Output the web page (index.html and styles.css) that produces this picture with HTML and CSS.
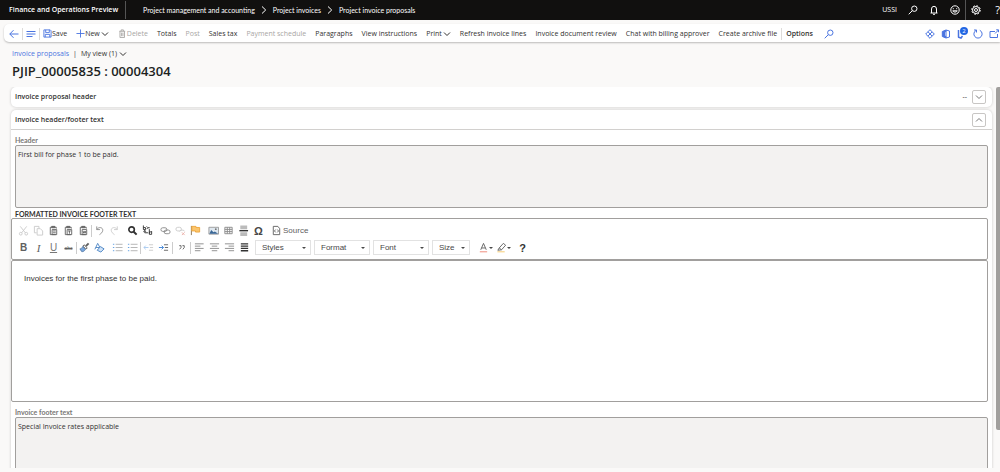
FILE: index.html
```html
<!DOCTYPE html>
<html lang="en">
<head>
  <meta charset="UTF-8">
  <title>Project invoice proposals</title>
  <link rel="stylesheet" href="styles.css">
</head>
<body>

<!-- shared icons -->
<svg class="sprite" aria-hidden="true">
  <symbol id="down" viewBox="0 0 8 8"><path d="M1 2.500 4 5.500 7 2.500"/></symbol>
  <symbol id="up" viewBox="0 0 8 8"><path d="M1 5.500 4 2.500 7 5.500"/></symbol>
  <symbol id="right" viewBox="0 0 8 8"><path d="M2 0.500 5.700 4 2 7.500"/></symbol>
  <symbol id="search" viewBox="0 0 10 10"><circle cx="6.300" cy="3.700" r="2.700"/><path d="M4.300 5.700.7 9.300"/></symbol>
  <symbol id="clip" viewBox="0 0 12 12"><path d="M8.500 10.500h-6v-8H4M7.500 2.500H9V4"/><path d="M4 1.500h3.500v1.500H4z" fill="currentColor"/><path d="M4.500 5h5v5.500h-5z"/></symbol>
</svg>

<header class="topbar">
  <span class="brand">Finance and Operations Preview</span>
  <nav class="crumbs">
    <a href="#">Project management and accounting</a>
    <svg class="i8"><use href="#right"/></svg>
    <a href="#">Project invoices</a>
    <svg class="i8"><use href="#right"/></svg>
    <a href="#">Project invoice proposals</a>
  </nav>
  <div class="top-right">
    <span class="company">USSI</span>
    <button aria-label="Search"><svg class="i10"><use href="#search"/></svg></button>
    <button aria-label="Notifications"><svg class="i10" viewBox="0 0 10 10"><path d="M1.500 8h7M2.500 8V4a2.500 2.700 0 0 1 5 0v4M4 9.300h2"/></svg></button>
    <button aria-label="Feedback"><svg class="i10" viewBox="0 0 10 10"><circle cx="5" cy="5" r="4.200"/><path d="M2.700 5.800a2.500 2.200 0 0 0 4.600 0zM3.300 3.200v1M6.700 3.200v1"/></svg></button>
    <button class="gear" aria-label="Settings"><svg class="i10" viewBox="0 0 10 10"><circle cx="5" cy="5" r="3.500"/><circle cx="5" cy="5" r="1.500"/><circle cx="5" cy="5" r="4.300" stroke-dasharray="1.700 1.670"/></svg></button>
    <button class="help" aria-label="Help">?</button>
  </div>
</header>

<div class="actionbar">
  <button class="blue" aria-label="Back"><svg class="i10" viewBox="0 0 10 10"><path d="M9.500 5H.8M4.500 1.200.8 5l3.700 3.800"/></svg></button>
  <i class="line"></i>
  <button class="blue" aria-label="Show list"><svg class="i10" viewBox="0 0 10 10"><path d="M.5 2.500h9M.5 5h9M.5 7.500h6"/></svg></button>
  <i class="line"></i>
  <button class="action"><svg class="i9 blue" viewBox="0 0 10 10"><path d="M1 1h7l1 1v7H1zM3 1v3h4V1M2.500 9V6h5v3"/></svg>Save</button>
  <button class="action"><svg class="i9 blue" viewBox="0 0 10 10"><path d="M5 .5v9M.5 5h9"/></svg>New<svg class="i8"><use href="#down"/></svg></button>
  <button class="action" disabled><svg class="i9" viewBox="0 0 10 10"><path d="M1.500 2.500h6.500M3.500 2.500V1h2.500v1.500M2.200 2.500v7h5v-7M4 4v4M5.500 4v4"/></svg>Delete</button>
  <button class="action">Totals</button>
  <button class="action" disabled>Post</button>
  <button class="action">Sales tax</button>
  <button class="action" disabled>Payment schedule</button>
  <button class="action">Paragraphs</button>
  <button class="action">View instructions</button>
  <button class="action">Print<svg class="i8"><use href="#down"/></svg></button>
  <button class="action">Refresh invoice lines</button>
  <button class="action">Invoice document review</button>
  <button class="action">Chat with billing approver</button>
  <button class="action">Create archive file</button>
  <i class="line"></i>
  <button class="action strong">Options</button>
  <button class="blue find" aria-label="Search actions"><svg class="i10"><use href="#search"/></svg></button>
  <div class="tools blue">
    <button aria-label="Power Apps"><svg class="i10" viewBox="0 0 10 10"><path d="M5 .7 9.300 5 5 9.300.7 5zM3 2.800 7 7M7 3 5 5M3 7l2-2"/></svg></button>
    <button aria-label="Open in Office"><svg class="i10" viewBox="0 0 10 10"><path d="M5 1 1.300 2.500v5L5 9v-1.500L3.500 7V3L5 2.500z" fill="currentColor"/><path d="M5 1l3.500 1v6L5 9z"/></svg></button>
    <button class="attach" aria-label="Attachments"><svg class="i10" viewBox="0 0 10 10"><path d="M1.500 1v7M1 8l3 1 1.500-2" stroke-width="1.500"/></svg><span class="badge">2</span></button>
    <button aria-label="Refresh"><svg class="i10" viewBox="0 0 10 10"><path d="M3.200 1.300a4.100 4.100 0 1 0 3.600 0M1 1h2.500v2.500"/></svg></button>
    <button aria-label="Open in new window"><svg class="i10" viewBox="0 0 10 10"><path d="M6 2.500H1v6h7.500V5M6 4.500 9.500 1M7.200.8h2.300v2.400"/></svg></button>
  </div>
</div>

<div class="titles">
  <a href="#" class="link">Invoice proposals</a><span class="bar">|</span><button class="view">My view (1)<svg class="i8"><use href="#down"/></svg></button>
  <h1>PJIP_00005835 : 00004304</h1>
</div>

<main class="content">
  <div class="sections">
    <section class="card">
      <div class="card-head">
        <h2>Invoice proposal header</h2>
        <span>--</span>
        <button class="toggle" aria-label="Expand"><svg class="i8"><use href="#down"/></svg></button>
      </div>
    </section>

    <section class="card">
      <div class="card-head open">
        <h2>Invoice header/footer text</h2>
        <button class="toggle" aria-label="Collapse"><svg class="i8"><use href="#up"/></svg></button>
      </div>

      <div class="field">
        <label for="headerText">Header</label>
        <textarea id="headerText" readonly>First bill for phase 1 to be paid.</textarea>
      </div>

      <label class="editor-label" for="editorText">FORMATTED INVOICE FOOTER TEXT</label>
      <div class="editor">
        <div class="editor-tools">
          <div class="row">
            <button class="off" aria-label="Cut"><svg viewBox="0 0 12 12"><path d="M2.500 1.500 8 8.500M9.500 1.500 4 8.500"/><circle cx="3" cy="9.500" r="1.500"/><circle cx="9" cy="9.500" r="1.500"/></svg></button>
            <button class="off" aria-label="Copy"><svg viewBox="0 0 12 12"><path d="M4 8.500H1.500v-7h5V4M4.500 4H8l2.500 2.500v4.500h-6z"/></svg></button>
            <button aria-label="Paste"><svg viewBox="0 0 12 12"><use href="#clip"/><path d="M5.500 6.500h3M5.500 8.500h3"/></svg></button>
            <button aria-label="Paste as plain text"><svg viewBox="0 0 12 12"><use href="#clip"/><path d="M5.500 6.500h3M7 6.500v3"/></svg></button>
            <button aria-label="Paste from Word"><svg viewBox="0 0 12 12"><use href="#clip"/><path d="M5.500 6.500 6.200 9 7 7l.8 2 .7-2.500"/></svg></button>
            <i class="sep"></i>
            <button class="mid" aria-label="Undo"><svg viewBox="0 0 12 12"><path d="M3 1.500V5h3.500M3 5c2-3.500 7-2.500 6.500 1C9.300 8 8 9 6 10.500"/></svg></button>
            <button class="off" aria-label="Redo"><svg viewBox="0 0 12 12"><path d="M9 1.500V5H5.500M9 5C7 1.500 2 2.500 2.500 6 2.700 8 4 9 6 10.500"/></svg></button>
            <i class="sep clear"></i>
            <button class="dark" aria-label="Find"><svg viewBox="0 0 12 12"><circle cx="5" cy="5" r="3" stroke-width="1.800"/><path d="m7.300 7.300 3.200 3.200" stroke-width="2.200"/></svg></button>
            <button class="dark" aria-label="Replace"><svg viewBox="0 0 12 12"><path d="M1.500.5V5h2.300V2.800H1.500M8 4.500v5M10.500 6.700v3.500H8V7.500h2.500M5 1.500l1.500 1.500L5 4.500M6.500 3h2M6.500 8.500H3V6M1.500 7.300 3 6l1.500 1.300"/></svg></button>
            <i class="sep clear"></i>
            <button class="mid" aria-label="Link"><svg viewBox="0 0 12 12"><rect x="1" y="3" width="6.500" height="4" rx="2"/><rect x="4.500" y="5.500" width="6.500" height="4" rx="2"/></svg></button>
            <button class="off" aria-label="Unlink"><svg viewBox="0 0 12 12"><rect x="1" y="2.500" width="6" height="4" rx="2"/><path d="M5 7c0-2 5.500-2 5.500 0"/><path d="m7.500 8 3 3m0-3-3 3" stroke="#ebb0a8"/></svg></button>
            <button aria-label="Anchor"><svg viewBox="0 0 12 12"><path d="M1.500 1v10" stroke="#8a7350"/><path d="M2 1.500h4.500v1.200h4v5H6V6.500H2z" fill="#fbc56d" stroke="#eda63c"/></svg></button>
            <i class="sep clear"></i>
            <button aria-label="Image"><svg viewBox="0 0 12 12"><path d="M1 2.500h10.500v7.500H1z" stroke="#999" fill="#dfe8f0"/><path d="m1.500 9.500 2-4 2.500 2.500 1.500-1 3.500 2.500z" fill="#3a6796" stroke="none"/><circle cx="8.500" cy="4.500" r="1" fill="#777" stroke="none"/></svg></button>
            <button class="mid" aria-label="Table"><svg viewBox="0 0 12 12"><path d="M2 2.500h8v7H2zM2 4.800h8M2 7.200h8M4.700 2.500v7M7.300 2.500v7"/></svg></button>
            <button class="dark" aria-label="Horizontal line"><svg viewBox="0 0 12 12"><path d="M2.500.5h7.500v4H2.500zM2.500 8h7.500v4H2.500z" fill="#bbb" stroke="none"/><path d="M1.500 6.200h9.500" stroke-width="1.500"/></svg></button>
            <button class="omega" aria-label="Special character">Ω</button>
            <i class="sep clear"></i>
            <button class="source"><svg viewBox="0 0 12 12"><path d="M2.500 1.500h5L9.500 4v6.500h-7zM5 5 3.800 6.500 5 8M7 5l1.200 1.500L7 8"/></svg>Source</button>
          </div>

          <div class="row">
            <button class="b" aria-label="Bold">B</button>
            <button class="it" aria-label="Italic">I</button>
            <button class="un" aria-label="Underline">U</button>
            <button class="st" aria-label="Strikethrough">abc</button>
            <i class="sep"></i>
            <button aria-label="Copy formatting"><svg viewBox="0 0 12 12"><path d="m7.500 4.500 3-3" stroke-width="2.200"/><path d="m5.500 3 3.500 3.500-1.500 1.200L4.300 4.500z"/><path d="M4 5 7 8c-1 2-2.500 2.700-4 2.500L1 7.500C2.500 7.500 3.300 6.500 4 5z" fill="#79a8df" stroke="#5b7ea8"/></svg></button>
            <button aria-label="Remove format"><svg viewBox="0 0 12 12"><path d="m1 8 3-6.500L6.500 6M2 6h3.500" stroke="#4b84c4"/><path d="m3.500 9 3.500-4 4 2.500-3.500 3.500z" fill="#cfe2f7" stroke="#4b84c4"/></svg></button>
            <i class="sep clear"></i>
            <button class="list" aria-label="Numbered list"><svg viewBox="0 0 12 12"><path d="M4 2.500h7.500M4 6h7.500M4 9.500h7.500"/><path d="M1 2.500h1.500M1 6h1.500M1 9.500h1.500" stroke="#5b9be0"/></svg></button>
            <button class="list" aria-label="Bulleted list"><svg viewBox="0 0 12 12"><path d="M4 2.500h7.500M4 6h7.500M4 9.500h7.500"/><path d="M1 2.500h1.500M1 6h1.500M1 9.500h1.500" stroke="#5b9be0"/></svg></button>
            <i class="sep"></i>
            <button class="off" aria-label="Decrease indent"><svg viewBox="0 0 12 12"><path d="M6.500 3H11M7.500 6H11M6.500 9H11"/><path d="M1 6h5M3 4 1 6l2 2" stroke="#a9caf0"/></svg></button>
            <button aria-label="Increase indent"><svg viewBox="0 0 12 12"><path d="M6.500 3H11M7.500 6H11M6.500 9H11"/><path d="M1 6h5M4 4l2 2-2 2" stroke="#3d83d6"/></svg></button>
            <i class="sep gap"></i>
            <button aria-label="Block quote"><svg viewBox="0 0 12 12"><path d="M3.500 4h2v2L4 8M7 4h2v2L7.500 8"/></svg></button>
            <i class="sep gap"></i>
            <button class="mid" aria-label="Align left"><svg viewBox="0 0 12 12"><path d="M1 2h9.500M1 4.500h6M1 7h9.500M1 9.500h6"/></svg></button>
            <button class="mid" aria-label="Center"><svg viewBox="0 0 12 12"><path d="M1 2h10M3 4.500h6M1 7h10M3 9.500h6"/></svg></button>
            <button class="mid" aria-label="Align right"><svg viewBox="0 0 12 12"><path d="M1 2h10M5 4.500h6M1 7h10M5 9.500h6"/></svg></button>
            <button class="dark" aria-label="Justify"><svg viewBox="0 0 12 12"><path d="M2 2h8M2 4.500h8M2 7h8M2 9.500h8" stroke-width="1.500"/></svg></button>
            <i class="sep clear"></i>
            <div class="combos">
              <span class="combo"><select aria-label="Styles"><option>Styles</option></select></span>
              <span class="combo"><select aria-label="Format"><option>Format</option></select></span>
              <span class="combo"><select aria-label="Font"><option>Font</option></select></span>
              <span class="combo small"><select aria-label="Size"><option>Size</option></select></span>
            </div>
            <button class="color" aria-label="Text color"><svg viewBox="0 0 12 12"><path d="m3 8.500 3-7 3 7M4 6.500h4"/><path d="M2 10.700h8" stroke="#ee8373"/></svg></button>
            <button class="color" aria-label="Background color"><svg viewBox="0 0 12 12"><path d="M3.500 6.500 8 1.500l2.500 2L6 8.500zM3.500 6.500 2 9l4-.5"/><path d="M1.500 10.700h8" stroke="#f5c869"/></svg></button>
            <button class="about" aria-label="About">?</button>
          </div>
        </div>
        <textarea id="editorText" class="editor-text">Invoices for the first phase to be paid.</textarea>
      </div>

      <div class="field">
        <label for="footerText">Invoice footer text</label>
        <textarea id="footerText" readonly>Special Invoice rates applicable</textarea>
      </div>
    </section>
  </div>
  <div class="scrollbar"></div>
</main>

</body>
</html>
```
FILE: styles.css
```css
* {
  box-sizing: border-box;
}
body {
  margin: 0;
  height: 100vh;
  display: flex;
  flex-direction: column;
  overflow: hidden;
  background: #faf9f8;
  color: #323130;
  font-family: "Open Sans", "Noto Sans", sans-serif;
  font-size: 7px;
  line-height: 10px;
}
button, select, textarea {
  font: inherit;
  color: inherit;
  border: none;
  background: none;
  padding: 0;
  margin: 0;
}
button {
  display: flex;
  align-items: center;
  justify-content: center;
  white-space: nowrap;
}
a {
  color: inherit;
  text-decoration: none;
}
svg {
  fill: none;
  stroke: currentColor;
  stroke-width: 1;
  flex: none;
}
.sprite {
  display: none;
}
.i8 {
  width: 8px;
  height: 8px;
}
.i9 {
  width: 9px;
  height: 9px;
}
.i10 {
  width: 10px;
  height: 10px;
}
.blue {
  color: #4a74e0;
}

/* black bar */
.topbar {
  height: 20px;
  flex: none;
  display: flex;
  align-items: center;
  background: #11100f;
  color: #fff;
}
.brand {
  width: 126px;
  line-height: 18px;
  padding-left: 9px;
  border-right: 1px solid #555;
  font-weight: 600;
  white-space: nowrap;
}
.crumbs {
  display: flex;
  align-items: center;
  gap: 5px;
  padding-left: 17px;
  font-family: Lato, sans-serif;
}
.top-right {
  margin-left: auto;
  height: 20px;
  display: flex;
  align-items: center;
}
.top-right button {
  width: 21px;
  height: 20px;
}
.company {
  margin-right: 5px;
}
.top-right .gear {
  border-left: 1px solid #555;
}
.top-right .help {
  width: 14px;
  justify-content: flex-end;
  font-size: 11px;
}

/* action bar */
.actionbar {
  flex: none;
  height: 18px;
  margin: 4px 0 0 4px;
  padding: 1px 0 0 5px;
  display: flex;
  align-items: center;
  background: #fff;
  border-radius: 5px 0 0 5px;
  box-shadow: 0 1px 2px rgba(0, 0, 0, 0.25);
}
.line {
  width: 1px;
  height: 12px;
  margin: 0 3px;
  background: #dddbd9;
}
.action {
  margin-right: 9px;
}
.action .i8 {
  margin-left: 1px;
}
.action:disabled {
  color: #a8a6a4;
}
.action + .line {
  margin: 0 4px 0 -5px;
}
.strong {
  font-weight: 600;
}
.find {
  margin-left: 2px;
}
.tools {
  margin-left: auto;
  display: flex;
  gap: 6px;
  padding-right: 1px;
}
.attach {
  position: relative;
}
.badge {
  position: absolute;
  top: -2px;
  right: -1px;
  width: 8px;
  height: 8px;
  border-radius: 4px;
  background: #2266e3;
  color: #fff;
  font-size: 6px;
  line-height: 8px;
}

/* page title */
.titles {
  flex: none;
  display: flex;
  flex-wrap: wrap;
  align-items: center;
  padding: 7px 12px 0;
}
.link {
  color: #4a74e0;
}
.bar {
  margin: 0 4px;
}
.view {
  gap: 2px;
}
h1 {
  width: 100%;
  margin: 3px 0 6px;
  font-size: 13px;
  line-height: 19px;
  font-weight: 600;
  color: #201f1e;
}

/* sections */
.content {
  flex: 1;
  min-height: 0;
  display: flex;
  margin-bottom: 4px;
  padding-left: 11px;
  overflow: hidden;
}
.sections {
  flex: 1;
}
.scrollbar {
  width: 4px;
  height: 90%;
  margin-left: 4px;
  background: #a19f9d;
  border-radius: 2px 0 0 2px;
}
.card {
  margin-bottom: 3px;
  background: #fff;
  border-radius: 5px;
  box-shadow: 0 0 3px rgba(0, 0, 0, 0.2);
}
.card-head {
  height: 20px;
  display: flex;
  align-items: center;
  gap: 5px;
  padding: 0 6px 0 4px;
}
.open {
  border-bottom: 1px solid #d2d0ce;
}
h2 {
  margin: 0 auto 0 0;
  font-size: 7px;
  font-weight: 600;
}
.toggle {
  width: 14px;
  height: 14px;
  border: 1px solid #c8c6c4;
  border-radius: 2px;
  color: #777;
}
.field {
  padding: 5px 4px 0;
}
.field label {
  display: block;
  font-family: Lato, sans-serif;
  font-weight: 700;
  color: #797775;
}
.field textarea {
  display: block;
  width: 100%;
  height: 63px;
  padding: 4px 2px;
  resize: none;
  background: #f3f2f1;
  border: 1px solid #a19f9d;
  border-radius: 2px;
}

/* rich text editor */
.editor-label {
  display: block;
  padding: 2px 4px 0;
  font-family: Lato, sans-serif;
  line-height: 8px;
  font-weight: 700;
}
.editor {
  margin-right: 4px;
  font-family: "Liberation Sans", Arial, sans-serif;
  font-size: 8px;
}
.editor-tools {
  display: flex;
  flex-direction: column;
  gap: 2px;
  padding: 4px;
  border: 1px solid #a19f9d;
  border-radius: 2px;
}
.row {
  display: flex;
  align-items: center;
  height: 15px;
  color: #606060;
}
.row button {
  width: 15px;
  height: 15px;
}
.row svg {
  width: 11px;
  height: 11px;
}
.row .off {
  color: #cacaca;
}
.row .mid {
  color: #8a8a8a;
}
.row .list {
  color: #b0b0b0;
}
.row .dark {
  color: #333;
}
.sep {
  width: 1px;
  height: 12px;
  background: #ccc;
}
.gap {
  margin: 0 1px;
}
.clear {
  margin: 0 1px;
  background: none;
}
.row .omega {
  font-size: 11px;
  font-weight: 700;
  color: #484848;
}
.row .source {
  width: auto;
  gap: 1px;
  padding-left: 2px;
}
.row .b {
  font-size: 10px;
  font-weight: 700;
}
.row .it {
  font-family: "Liberation Serif", serif;
  font-size: 11px;
  font-style: italic;
}
.row .un {
  font-size: 10px;
  text-decoration: underline;
  color: #777;
}
.row .st {
  font-size: 5px;
  text-decoration: line-through;
}
.combos {
  display: flex;
  gap: 3px;
  margin-right: 6px;
  color: #484848;
}
.combo {
  position: relative;
  width: 56px;
  height: 15px;
  border: 1px solid #e2e2e2;
}
.combo select {
  appearance: none;
  width: 100%;
  height: 13px;
  padding-left: 6px;
}
.combo::after, .color::after {
  content: "";
  border: 2px solid transparent;
  border-top-color: #484848;
  border-bottom: none;
}
.combo::after {
  position: absolute;
  top: 6px;
  right: 4px;
}
.small {
  width: 38px;
}
.row .color {
  width: 18px;
}
.row .about {
  margin-left: 3px;
  font-size: 11px;
  font-weight: 700;
  color: #333;
}
.editor-text {
  display: block;
  width: 100%;
  height: 142px;
  padding: 13px 12px;
  resize: none;
  border: 1px solid #a19f9d;
  border-radius: 2px;
}
```
